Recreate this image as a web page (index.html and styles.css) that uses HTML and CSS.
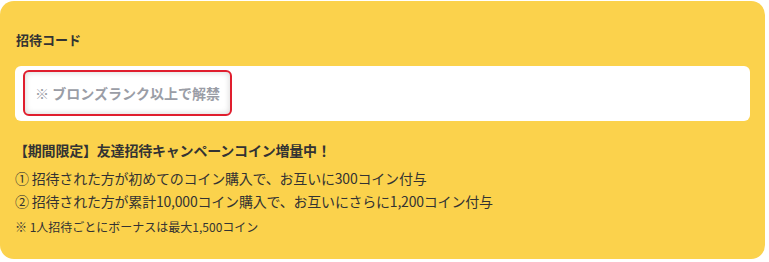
FILE: index.html
```html
<!DOCTYPE html>
<html lang="ja">
<head>
  <meta charset="UTF-8">
  <meta name="viewport" content="width=device-width, initial-scale=1.0">
  <title>招待コード</title>
  <link rel="stylesheet" href="styles.css">
</head>
<body>
  <div class="card">
    <div class="title">招待コード</div>
    <div class="code-box">
      <span class="locked">※ ブロンズランク以上で解禁</span>
    </div>

    <div class="campaign">
      <div class="campaign-head">【期間限定】友達招待キャンペーンコイン増量中！</div>
      <div class="campaign-line">① 招待された方が初めてのコイン購入で、お互いに300コイン付与</div>
      <div class="campaign-line">② 招待された方が累計10,000コイン購入で、お互いにさらに1,200コイン付与</div>
      <div class="campaign-note">※ 1人招待ごとにボーナスは最大1,500コイン</div>
    </div>
  </div>
</body>
</html>
```

FILE: styles.css
```css
body{
  margin: 0;
  background: #fff;
  font-family: "Noto Sans CJK JP", "Noto Sans", sans-serif;
  color: #333;
}
.card{
  margin-top: 1px;
  width: 765px;
  height: 258px;
  box-sizing: border-box;
  padding: 29px 15px 0 15px;
  background-color: #fbd24c;
  border-radius: 14px;
}
.title{
  font-size: 13px;
  font-weight: bold;
  line-height: 20px;
  padding-left: 1px;
}
.code-box{
  margin-top: 16px;
  height: 55px;
  box-sizing: border-box;
  padding: 4px 8px;
  background: #fff;
  border-radius: 6px;
  display: flex;
  align-items: flex-start;
}
.locked{
  height: 46px;
  box-sizing: border-box;
  padding: 0 10px;
  display: flex;
  align-items: center;
  border: 2px solid #e01e2e;
  border-radius: 6px;
  box-shadow: inset 0 0 6px rgba(0,0,0,0.18);
  color: #9a9da6;
  font-size: 14px;
  font-weight: bold;
}
.campaign{
  margin-top: 19px;
}
.campaign-head{
  font-size: 14px;
  font-weight: bold;
  line-height: 20px;
  margin-bottom: 7px;
  margin-left: -1px;
  letter-spacing: -0.2px;
}
.campaign-line{
  font-size: 14px;
  line-height: 23px;
  letter-spacing: -0.2px;
}
.campaign-note{
  font-size: 12px;
  line-height: 23px;
  margin-top: 2px;
}
```
